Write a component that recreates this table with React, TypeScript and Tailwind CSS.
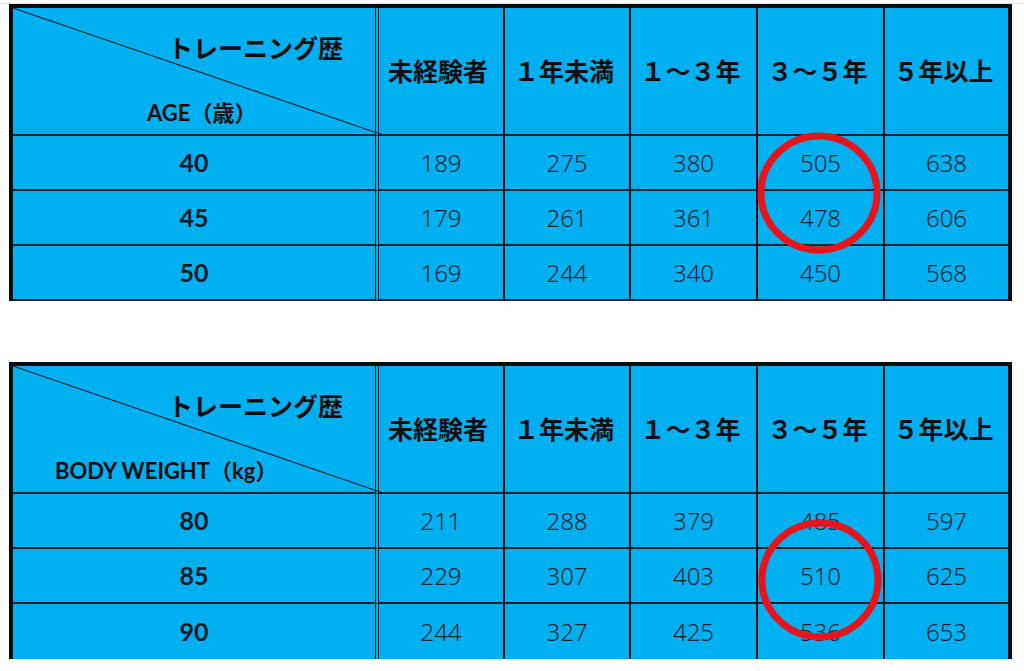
import React from "react";

const COLS = ["未経験者", "１年未満", "１～３年", "３～５年", "５年以上"];

type Row = { label: string; values: number[] };

const T1: Row[] = [
  { label: "40", values: [189, 275, 380, 505, 638] },
  { label: "45", values: [179, 261, 361, 478, 606] },
  { label: "50", values: [169, 244, 340, 450, 568] },
];

const T2: Row[] = [
  { label: "80", values: [211, 288, 379, 485, 597] },
  { label: "85", values: [229, 307, 403, 510, 625] },
  { label: "90", values: [244, 327, 425, 536, 653] },
];

const colBorder = [
  "border-r-[4px] border-double border-r-[#0b0b0b]",
  "border-r-2 border-r-[#0b0b0b]",
  "border-r-2 border-r-[#0b0b0b]",
  "border-r-2 border-r-[#0b0b0b]",
  "border-r-2 border-r-[#0b0b0b]",
  "",
];

function Circle({ className }: { className: string }) {
  return (
    <svg
      className={"absolute pointer-events-none " + className}
      width="124"
      height="122"
      viewBox="0 0 124 122"
    >
      <ellipse cx="62" cy="61" rx="58" ry="57" fill="none" stroke="#e8141b" strokeWidth="7" />
    </svg>
  );
}

function Table({
  rows,
  label,
  labelPad,
  lastBorder,
  circleClass,
}: {
  rows: Row[];
  label: React.ReactNode;
  labelPad: string;
  lastBorder: boolean;
  circleClass: string;
}) {
  return (
    <div className="relative ml-[9px] w-[1003px] bg-[#00b0f0] border-l-4 border-t-4 border-r-4 border-[#0b0b0b]">
      <div className="grid grid-cols-[366px_126px_126px_127px_127px_123px]">
        {/* header */}
        <div className={"relative h-[128px] border-b-2 border-b-[#14222c] flex flex-col " + colBorder[0]}>
          <svg
            className="absolute left-0 top-0 overflow-visible pointer-events-none"
            width="371"
            height="127"
            viewBox="0 0 371 127"
          >
            <line x1="0" y1="0" x2="370" y2="127" stroke="#132430" strokeWidth="1.2" />
          </svg>
          <div className="pt-[22px] h-[56px] flex justify-end pr-[32px] font-['Noto_Sans_CJK_JP',sans-serif] font-bold text-[25px] leading-[34px] text-[#0d0d0d]">
            トレーニング歴
          </div>
          <div
            className={
              "mt-[32px] flex items-center h-[34px] font-['Lato','Noto_Sans_CJK_JP',sans-serif] font-bold text-[22px] leading-[34px] text-[#0d0d0d] whitespace-nowrap " +
              labelPad
            }
          >
            {label}
          </div>
        </div>
        {COLS.map((c, i) => (
          <div
            key={c}
            className={
              "h-[128px] pr-[6px] border-b-2 border-b-[#14222c] flex items-center justify-center font-['Noto_Sans_CJK_JP',sans-serif] font-bold text-[25px] text-[#0d0d0d] whitespace-nowrap " +
              colBorder[i + 1]
            }
          >
            {c}
          </div>
        ))}
        {rows.map((r, ri) => {
          const last = ri === rows.length - 1;
          const bb = !last || lastBorder ? "border-b-2 border-b-[#14222c]" : "";
          return (
            <React.Fragment key={r.label}>
              <div
                className={
                  "h-[55px] flex items-center justify-center font-['Lato',sans-serif] font-bold text-[25px] text-[#0d1822] " +
                  bb +
                  " " +
                  colBorder[0]
                }
              >
                {r.label}
              </div>
              {r.values.map((v, vi) => (
                <div
                  key={vi}
                  className={
                    "h-[55px] flex items-center justify-center font-['Noto_Sans',sans-serif] font-light text-[24px] text-[#132533] " +
                    bb +
                    " " +
                    colBorder[vi + 1]
                  }
                >
                  {v}
                </div>
              ))}
            </React.Fragment>
          );
        })}
      </div>
      <Circle className={circleClass} />
    </div>
  );
}

export default function App() {
  return (
    <div className="w-[1024px] h-[671px] overflow-hidden bg-white relative">
      <div className="h-[4px] border-b border-[#e4e4e4]" />
      <Table
        rows={T1}
        label={<span>AGE（歳）</span>}
        labelPad="pl-[134px]"
        lastBorder={true}
        circleClass="left-[744px] top-[124px]"
      />
      <div className="h-[61px]" />
      <Table
        rows={T2}
        label={<span>BODY WEIGHT（kg）</span>}
        labelPad="pl-[42px]"
        lastBorder={false}
        circleClass="left-[745px] top-[153px]"
      />
    </div>
  );
}
